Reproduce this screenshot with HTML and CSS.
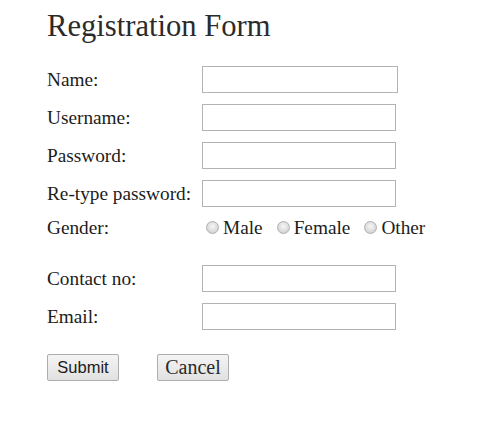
FILE: index.html
```html
<!DOCTYPE html>
<html>
<head>
<meta charset="utf-8">
<title>Registration Form</title>
<link rel="stylesheet" href="styles.css">
</head>
<body>
<div class="page">
  <h1 class="title">Registration Form</h1>
  <form class="form">
    <div class="row">
      <label class="label">Name:</label>
      <input class="field field-wide" type="text">
    </div>
    <div class="row">
      <label class="label">Username:</label>
      <input class="field" type="text">
    </div>
    <div class="row">
      <label class="label">Password:</label>
      <input class="field" type="password">
    </div>
    <div class="row">
      <label class="label">Re-type password:</label>
      <input class="field" type="password">
    </div>
    <div class="row row-gender">
      <span class="label">Gender:</span>
      <div class="radios">
        <input class="radio" type="radio" name="g"><span class="opt">Male</span>
        <input class="radio" type="radio" name="g"><span class="opt">Female</span>
        <input class="radio" type="radio" name="g"><span class="opt">Other</span>
      </div>
    </div>
    <div class="row">
      <label class="label">Contact no:</label>
      <input class="field" type="text">
    </div>
    <div class="row">
      <label class="label">Email:</label>
      <input class="field" type="text">
    </div>
    <div class="buttons">
      <input class="btn btn-submit" type="submit" value="Submit">
      <button class="btn btn-cancel" type="button">Cancel</button>
    </div>
  </form>
</div>
</body>
</html>
```

FILE: styles.css
```css
html, body {
  margin: 0;
  padding: 0;
  background: #ffffff;
}

.page {
  padding: 9px 0 0 47px;
  font-family: "Liberation Serif", "Times New Roman", serif;
  color: #1c1c1c;
}

.title {
  margin: 0 0 23px 0;
  font-size: 30.6px;
  line-height: 34px;
  font-weight: normal;
  color: #2b2b2b;
}

.form {
  display: flex;
  flex-direction: column;
}

.row {
  display: flex;
  align-items: center;
  height: 27px;
  margin-bottom: 11px;
  font-size: 19.3px;
  line-height: 27px;
}

.row-gender {
  margin-top: -4px;
  margin-bottom: 24px;
}

.label {
  width: 155px;
  flex: none;
  white-space: nowrap;
}

.field {
  box-sizing: border-box;
  width: 194px;
  height: 27px;
  margin: 0;
  padding: 2px 4px;
  border: 1px solid #b3b3b3;
  background: #fff;
  font-family: "Liberation Serif", serif;
  font-size: 16px;
}

.field-wide {
  width: 196px;
}

.radios {
  display: flex;
  align-items: center;
  padding-left: 4px;
}

.radio {
  appearance: none;
  -webkit-appearance: none;
  box-sizing: border-box;
  width: 13px;
  height: 13px;
  margin: 0 4px 0 0;
  border: 1px solid #b0b0b0;
  border-radius: 50%;
  background: radial-gradient(circle at 50% 40%, #f6f6f6 0%, #e2e2e2 45%, #c6c6c6 100%);
  flex: none;
}

.opt {
  margin-right: 14px;
}

.buttons {
  display: flex;
  align-items: center;
  margin-top: 13px;
  gap: 38px;
}

.btn {
  box-sizing: border-box;
  width: 72px;
  height: 27px;
  margin: 0;
  padding: 0;
  border: 1px solid #adadad;
  border-radius: 2px;
  background: linear-gradient(#f4f4f4, #e1e1e1);
  color: #1c1c1c;
}

.btn-submit {
  font-family: "Liberation Sans", Arial, sans-serif;
  font-size: 16.5px;
}

.btn-cancel {
  font-family: "Liberation Serif", "Times New Roman", serif;
  font-size: 20px;
  color: #2a2a2a;
}
```
